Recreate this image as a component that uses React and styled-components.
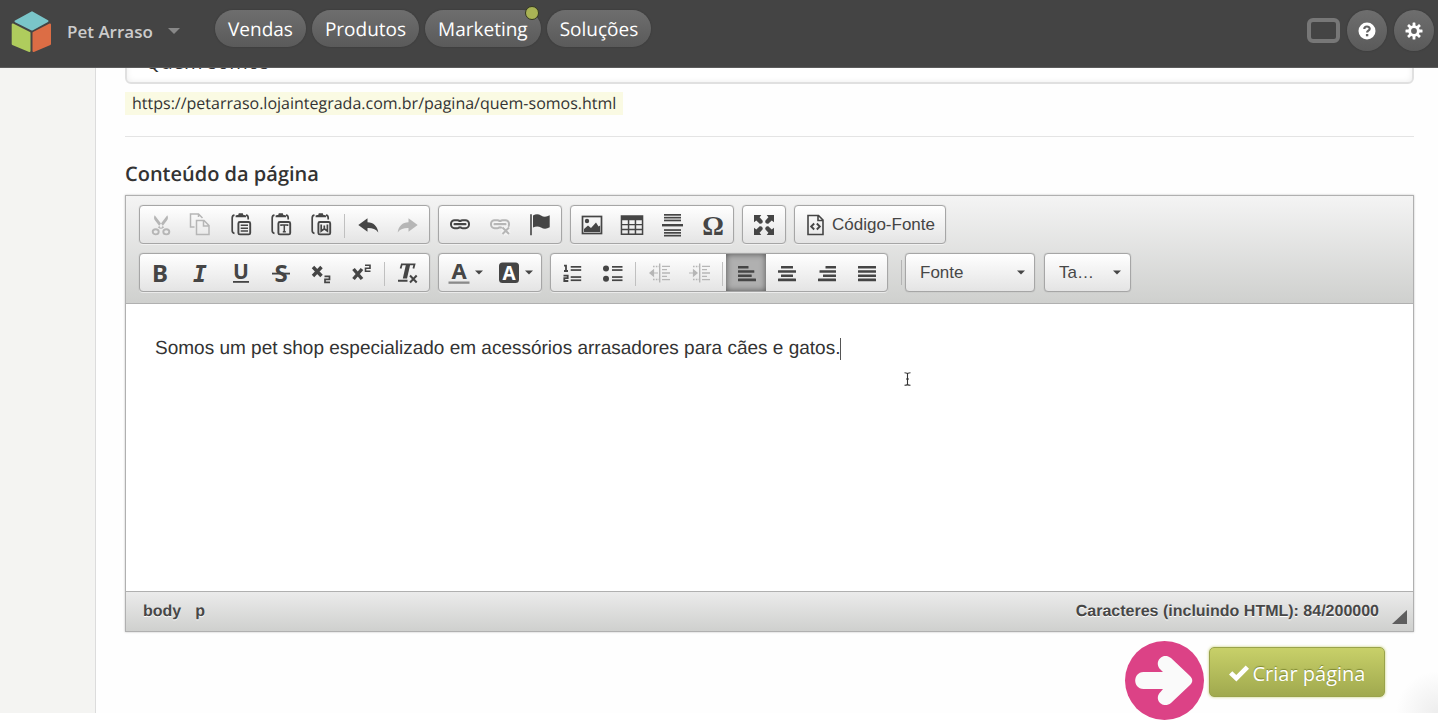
import React from "react";
import styled, { createGlobalStyle, css } from "styled-components";

const ui = '"Open Sans", "Noto Sans", sans-serif';
const editorFont = '"Liberation Sans", Arial, sans-serif';

const GlobalStyle = createGlobalStyle`
  *, *::before, *::after { box-sizing: border-box; }
  body { margin: 0; background: #fff; font-family: ${ui}; color: #333; text-rendering: geometricPrecision; }
  button, input, select { font: inherit; color: inherit; }
  button { margin: 0; padding: 0; border: 0; background: none; cursor: pointer; }
  svg { display: block; flex: none; overflow: visible; }
`;

/* ---------- top bar ---------- */
const TopBar = styled.header`
  position: fixed;
  inset: 0 0 auto 0;
  z-index: 10;
  display: flex;
  align-items: flex-start;
  height: 68px;
  padding: 10px 4px 0 10px;
  background: #444;
  border-bottom: 1px solid #5c5c5c;
`;
const StoreButton = styled.button`
  display: flex;
  align-items: center;
  width: 205px;
  height: 42px;
  gap: 15px;
  color: #ccc;
  font-size: 17px;
  font-weight: 600;
`;
const Nav = styled.nav`
  display: flex;
  flex: 1;
  gap: 6px;
`;
const raised = css`
  background: linear-gradient(#6e6e6e, #5a5a5a);
  box-shadow: 0 0 2px rgba(0, 0, 0, 0.25);
`;
const NavLink = styled.a`
  ${raised}
  position: relative;
  height: 37px;
  padding: 0 13px;
  border-radius: 19px;
  color: #fff;
  font-size: 19px;
  line-height: 38px;
  text-decoration: none;
`;
const Dot = styled.span`
  position: absolute;
  top: -4px;
  right: 2px;
  width: 14px;
  height: 14px;
  border: 1px solid #33361f;
  border-radius: 50%;
  background: #a9b355;
`;
const Tools = styled.div`
  display: flex;
  align-items: center;
  gap: 7px;
`;
const ScreenButton = styled.button`
  width: 33px;
  height: 25px;
  border: 4px solid #777;
  border-radius: 6px;
`;
const RoundButton = styled.button`
  ${raised}
  display: grid;
  place-items: center;
  width: 40px;
  height: 41px;
  border-radius: 50%;
`;

/* ---------- page ---------- */
const Page = styled.div`
  min-height: 100vh;
  padding-bottom: 7px;
`;
const Layout = styled.div`
  display: grid;
  grid-template-columns: 96px minmax(0, 1fr);
`;
const Side = styled.aside`
  background: #f4f4f2;
  border-right: 1px solid #dcdcdc;
`;
const Main = styled.main`
  padding: 40px 24px 16px 29px;
  background: radial-gradient(circle at 100% 100%, #ededed 0, #fefefe 42px);
`;
const TitleInput = styled.input`
  display: block;
  width: 100%;
  height: 44px;
  padding: 0 18px 2px;
  border: 2px solid #e0e0e0;
  border-radius: 6px;
  background: #fff;
  box-shadow: inset 0 0 6px rgba(0, 0, 0, 0.08);
  font-size: 20px;
`;
const PageUrl = styled.p`
  width: fit-content;
  margin: 8px 0 21px;
  padding: 0 7px;
  background: #fafae3;
  font-size: 16px;
  line-height: 23px;
`;
const Rule = styled.hr`
  height: 1px;
  margin: 0 0 23px;
  border: 0;
  background: #e4e4e4;
`;
const Label = styled.h2`
  margin: 0 0 7px;
  font-size: 20px;
  font-weight: 600;
  line-height: 28px;
`;

/* ---------- editor ---------- */
const Editor = styled.section`
  border: 1px solid #b0b0b0;
  box-shadow: 0 0 2px rgba(0, 0, 0, 0.25);
  background: #fff;
  color: #474747;
  font-family: ${editorFont};
`;
const Toolbar = styled.div`
  display: flex;
  flex-direction: column;
  gap: 9px;
  padding: 9px 13px 11px;
  border-bottom: 1px solid #b0b0b0;
  background: linear-gradient(#f4f4f4, #cfd0ce);
`;
const ToolRow = styled.div`
  display: flex;
  gap: 8px;
`;
const Group = styled.div`
  display: flex;
  height: 39px;
  padding: 0 1px;
  border: 1px solid #a6a6a6;
  border-radius: 4px;
  background: linear-gradient(#fff, #e4e4e4);
  box-shadow: 0 1px 0 rgba(255, 255, 255, 0.6), 0 0 1px rgba(0, 0, 0, 0.3);
`;
const ToolButton = styled.button`
  display: flex;
  align-items: center;
  justify-content: center;
  gap: 3px;
  width: ${(p) => p.$width || "40px"};
  color: ${(p) => (p.disabled ? "#b6b6b6" : "#454545")};
  font-size: 17px;
  ${(p) =>
    p.$active &&
    css`
      background: #b0b0b0;
      box-shadow: inset 0 0 6px rgba(0, 0, 0, 0.55);
    `}
`;
const Divider = styled.span`
  width: 1px;
  margin: 8px 3px 5px;
  background: #c0c0c0;
`;
const RowDivider = styled.span`
  width: 1px;
  margin: 7px -5px 7px 5px;
  background: #b4b4b4;
`;
const SelectBox = styled.label`
  display: grid;
  align-items: center;
  width: ${(p) => p.$width};
  height: 39px;
  border: 1px solid #a6a6a6;
  border-radius: 4px;
  background: linear-gradient(#fff, #e4e4e4);
  box-shadow: 0 0 1px rgba(0, 0, 0, 0.3);
  margin-right: 1px;
  & > * { grid-area: 1 / 1; }
  & > svg { justify-self: end; margin-right: 8px; pointer-events: none; }
`;
const Select = styled.select`
  appearance: none;
  width: 100%;
  height: 100%;
  padding: 0 24px 0 14px;
  border: 0;
  background: none;
  font-size: 17px;
`;
const Writing = styled.div`
  position: relative;
  min-height: 287px;
  padding: 31px 29px;
  outline: 0;
  color: #333;
  font-size: 19px;
  line-height: 28px;
  p { display: flex; align-items: center; margin: 0; }
`;
const Caret = styled.span`
  width: 1px;
  height: 22px;
  background: #555;
`;
const Pointer = styled.svg`
  position: absolute;
  left: 777px;
  top: 68px;
`;
const Status = styled.footer`
  display: flex;
  align-items: center;
  height: 40px;
  padding: 1px 6px 0 17px;
  border-top: 1px solid #b0b0b0;
  background: linear-gradient(#ebebeb, #cfd0ce);
  font-size: 16px;
  font-weight: 700;
  text-shadow: 0 1px 0 #fff;
`;
const Path = styled.div`
  display: flex;
  flex: 1;
  gap: 14px;
  a { color: inherit; text-decoration: none; }
`;
const Grip = styled.svg`
  margin: 10px 0 0 13px;
`;

/* ---------- submit ---------- */
const Actions = styled.div`
  display: flex;
  justify-content: flex-end;
  padding: 15px 29px 0;
`;
const Anchor = styled.div`
  position: relative;
`;
const Submit = styled.button`
  display: flex;
  align-items: center;
  justify-content: center;
  gap: 4px;
  width: 176px;
  height: 50px;
  padding-top: 2px;
  border: 1px solid #9aa34b;
  border-radius: 5px;
  background: linear-gradient(#c8d069, #a0a94e);
  box-shadow: 0 0 3px #c3cb6c;
  color: #fff;
  font-size: 20px;
  text-shadow: 0 -1px 1px rgba(70, 80, 0, 0.5);
`;
const Hint = styled.svg`
  position: absolute;
  right: calc(100% + 5px);
  top: -6px;
`;

const Icon = ({ children, w = 24 }) => (
  <svg width={w} height="24" viewBox={`0 0 ${w} 24`} fill="currentColor" aria-hidden="true">
    {children}
  </svg>
);
const line = { fill: "none", stroke: "currentColor" };
const sans = { fontFamily: '"Noto Sans", "Open Sans", sans-serif', fontWeight: 700, textAnchor: "middle" };
const bars = (list) => list.map(([x, y, w, h], i) => <rect key={i} x={x} y={y} width={w} height={h} />);
const alignment = (rows) =>
  rows.map(([x, w], i) => <rect key={i} x={x} y={5 + i * 4.2} width={w} height="2.6" rx=".3" />);

const Arrow = () => (
  <svg width="10" height="5" viewBox="0 0 10 5" aria-hidden="true">
    <path d="M1 .5h8L5 4.6z" fill="#454545" />
  </svg>
);

const Clipboard = ({ children }) => (
  <>
    <path d="M5.5 2.2C3.8 2.4 3.2 3.3 3.2 5v12.5c0 1.7.6 2.6 2.3 2.8M17 2.2c1.6.2 2.2 1.1 2.2 2.8v1.5" {...line} strokeWidth="1.7" />
    <path d="M6.6 4.3V2.4l1.6-.5h1L9.8.2h4l.6 1.7h1l1.6.5v1.9z" />
    <rect x="9.4" y="9" width="11.8" height="12.4" rx="1.5" {...line} strokeWidth="1.9" />
    {children}
  </>
);
const Links = () => (
  <>
    <rect x="3" y="7.2" width="10" height="8" rx="3.6" {...line} strokeWidth="2" />
    <rect x="11" y="7.2" width="10" height="8" rx="3.6" {...line} strokeWidth="2" />
    <path d="M7 11.2h10" stroke="#f8f8f8" strokeWidth="4.4" />
    <path d="M6.6 11.2h10.8" {...line} strokeWidth="2.2" strokeLinecap="round" />
  </>
);
const Indent = ({ inward }) => (
  <>
    <path d="M12.7 2.5v19" {...line} strokeWidth="1.4" />
    <path d="M6 5.5h6M6 18.5h6" {...line} strokeWidth="1.3" strokeDasharray="1.6 1.2" />
    <path d="M15 5.3h8M15 8.7h5M15 12h8M15 15.3h5M15 18.7h8" {...line} strokeWidth="1.3" />
    <path d={inward ? "M2 12h7M6.5 9l3.6 3-3.6 3z" : "M4 12h7M6.5 9L2.9 12l3.6 3z"} {...line} fill="currentColor" strokeWidth="1.2" />
  </>
);

const glyphs = {
  cut: (
    <>
      <path d="M5.7 2.2c-1.2 2.2-.6 4 .4 5.400l6.500 8.500 2.500-1.700zM18.300 2.200c1.200 2.200.600 4-.400 5.400l-6.500 8.500-2.500-1.700z" />
      <ellipse cx="6.700" cy="18.800" rx="3" ry="2.600" {...line} strokeWidth="1.900" />
      <ellipse cx="17.300" cy="18.800" rx="3" ry="2.600" {...line} strokeWidth="1.900" />
    </>
  ),
  copy: (
    <path d="M5.500 14H1.500V1h8l4 4M9.500 1v3M7.500 7.500h7.500l5 5V21.500H7.500zM14.500 7.500v5.500H20" {...line} strokeWidth="1.500" />
  ),
  paste: <Clipboard><path d="M11.700 12.300h7.300M11.700 15.200h7.300M11.700 18.100h7.300" {...line} strokeWidth="1.500" /></Clipboard>,
  pasteText: <Clipboard><path d="M12 13v-1h6.600v1M15.300 12v7M13.800 18.700h3" {...line} strokeWidth="1.500" /></Clipboard>,
  pasteWord: <Clipboard><path d="M12.200 11.500v6.500l3.100-2.300 3.100 2.300v-6.500M15.300 12.500v3" {...line} strokeWidth="1.700" /></Clipboard>,
  undo: <path d="M2.300 12L11.500 5.200v4.100c6 .2 9.800 3.700 10.800 10.100-2.600-3.400-6-4.400-10.800-4.300V18.800z" />,
  redo: <path d="M21.700 12L12.500 5.200v4.100c-6 .2-9.800 3.700-10.800 10.100 2.600-3.400 6-4.400 10.800-4.300V18.800z" />,
  link: <Links />,
  unlink: (
    <>
      <Links />
      <path d="M14.500 14.500l6.500 6.500M21 14.500L14.500 21" stroke="#f4f4f4" strokeWidth="5" />
      <path d="M14.500 14.500l6.500 6.500M21 14.500L14.500 21" {...line} strokeWidth="2" />
    </>
  ),
  flag: <path d="M2.200 1.300h1.600v21H2.200zM5 2.500c3-1.800 5.500-1.600 8 0 2.800 1.700 5.500 1.500 8.700-.2v12c-3 1.800-5.900 1.900-8.700.2-2.500-1.500-5-1.500-8 0z" />,
  image: (
    <>
      <rect x="2.500" y="3.500" width="19" height="17" {...line} strokeWidth="1.700" />
      <circle cx="7" cy="8" r="2.200" />
      <path d="M4 19v-3l4-3.500 3 2.500 5-5.500 2.500 4 1.700-1V19z" />
    </>
  ),
  table: <path d="M.7 2.300h22.600v19.700H.7zM2.200 7.300v3.600h5.600V7.300zm7.100 0v3.600h5.400V7.300zm6.900 0v3.600h5.600V7.300zM2.200 12.300v3.500h5.600v-3.500zm7.100 0v3.500h5.400v-3.500zm6.900 0v3.500h5.600v-3.500zM2.200 17.200v3.400h5.600v-3.400zm7.100 0v3.400h5.400v-3.400zm6.900 0v3.400h5.600v-3.400z" fillRule="evenodd" />,
  rule: bars([[4, 1, 17, 1.7], [4, 3.8, 17, 1.7], [4, 6.6, 17, 1.7], [2, 11, 21, 2.4], [4, 16.2, 17, 1.7], [4, 19, 17, 1.7], [4, 21.8, 17, 1.7]]),
  omega: <text x="13" y="22" fontFamily="Liberation Serif, serif" fontWeight="700" fontSize="27" textAnchor="middle">Ω</text>,
  maximize: (
    <>
      {[0, 90, 180, 270].map((a) => (
        <path key={a} transform={`rotate(${a} 12 12)`} d="M2 2h7.300L7.600 4.300 10.700 7.700c.5 1.900-1.200 3.500-3 3L4.300 7.600 2 9.300z" />
      ))}
    </>
  ),
  bold: <text x="11" y="21" fontSize="24" {...sans}>B</text>,
  italic: <text x="11" y="21" fontFamily="DejaVu Sans Mono, monospace" fontWeight="700" fontStyle="italic" fontSize="23" textAnchor="middle">I</text>,
  underline: <><text x="12" y="18" fontSize="21" {...sans}>U</text><rect x="4" y="20" width="16" height="1.800" /></>,
  strike: <><text x="12" y="21" fontSize="24" {...sans}>S</text><rect x="3" y="11.700" width="18" height="1.800" /></>,
  sub: <><path d="M4 6l8.500 9M12.500 6L4 15" {...line} strokeWidth="3.400" /><path d="M15.500 15.300h5v3h-4.500v3h5" {...line} strokeWidth="1.700" /></>,
  sup: <><path d="M4.500 8l8.500 10M13 8L4.500 18" {...line} strokeWidth="3.400" /><path d="M16 4.300h5v3h-4.500v3h5" {...line} strokeWidth="1.600" /></>,
  clear: (
    <>
      <path d="M4.600 7.500l1.200-4.200h12.700L17.400 7.500" {...line} strokeWidth="1.800" />
      <path d="M10 3.300h4.300L11 17.500H6.800z" />
      <path d="M2 19.700h9.500M14 14.500l6.700 7M20.700 14.500l-6.700 7" {...line} strokeWidth="2" />
    </>
  ),
  color: <><text x="12" y="18" fontSize="22" {...sans}>A</text><rect x="1.500" y="20.500" width="21" height="2.300" fill="#8a8a8a" /></>,
  fill: <><rect x="2" y="1.500" width="20" height="20.500" rx="3.500" /><text x="12" y="18.500" fontSize="19" fill="#fff" {...sans}>A</text></>,
  numbers: (
    <>
      <path d="M4 4.700h2V9.700M4 10h4M3.500 14.600h4.200v2.600H4.300v2.800h4" {...line} strokeWidth="1.800" />
      {bars([[10.7, 5, 10.5, 1.7], [10.7, 8.2, 10.5, 1.7], [10.7, 15.2, 10.5, 1.7], [10.7, 18.4, 10.5, 1.7]])}
    </>
  ),
  bullets: (
    <>
      <circle cx="6" cy="7.500" r="3" /><circle cx="6" cy="17.700" r="3" />
      {bars([[12, 5, 10.5, 1.7], [12, 8.2, 10.5, 1.7], [12, 15.2, 10.5, 1.7], [12, 18.4, 10.5, 1.7]])}
    </>
  ),
  outdent: <Indent />,
  indent: <Indent inward />,
  left: alignment([[4, 10.5], [4, 16.3], [4, 13.7], [4, 18]]),
  center: alignment([[7, 12], [4, 18], [7, 12], [4, 18]]),
  right: alignment([[11.5, 10.5], [5.5, 16.500], [9, 13], [4, 18]]),
  justify: alignment([[4, 18], [4, 18], [4, 18], [4, 18]]),
};

const Tool = ({ name, label, off, active, menu }) => (
  <ToolButton type="button" aria-label={label} disabled={off} $active={active} $width={menu && "50px"}>
    <Icon>{glyphs[name]}</Icon>
    {menu && <Arrow />}
  </ToolButton>
);

const Cube = () => (
  <svg width="42" height="44" viewBox="0 0 42 44" aria-hidden="true" strokeLinejoin="round" strokeWidth="2">
    <path d="M22 3.300L37.500 12 22 20.500 5.500 12.300z" fill="#7ac5c9" stroke="#7ac5c9" />
    <path d="M2.700 15.500L19.500 24V42L2.700 35z" fill="#afcc5d" stroke="#afcc5d" />
    <path d="M40 15.500L23.500 24V42L40 35z" fill="#dc6d45" stroke="#dc6d45" />
  </svg>
);

export default function App() {
  return (
    <Page>
      <GlobalStyle />
      <TopBar>
        <StoreButton type="button">
          <Cube />
          Pet Arraso
          <svg width="12" height="6" viewBox="0 0 12 6" aria-hidden="true"><path d="M0 0h12L6 6z" fill="#888" /></svg>
        </StoreButton>
        <Nav>
          <NavLink href="#vendas">Vendas</NavLink>
          <NavLink href="#produtos">Produtos</NavLink>
          <NavLink href="#marketing">Marketing<Dot /></NavLink>
          <NavLink href="#solucoes">Soluções</NavLink>
        </Nav>
        <Tools>
          <ScreenButton type="button" aria-label="Tela" />
          <RoundButton type="button" aria-label="Ajuda">
            <svg width="18" height="18" viewBox="0 0 18 18">
              <circle cx="9" cy="9" r="8.500" fill="#fff" />
              <path d="M6.300 6.900C6.300 3.700 11.700 3.700 11.700 6.800c0 1.900-2.600 1.900-2.600 3.700" fill="none" stroke="#626262" strokeWidth="2.200" />
              <rect x="7.900" y="12" width="2.400" height="2.300" fill="#626262" />
            </svg>
          </RoundButton>
          <RoundButton type="button" aria-label="Configurações">
            <svg width="18" height="18" viewBox="0 0 18 18">
              {[0, 45, 90, 135].map((a) => (
                <rect key={a} x="7.600" y="0.500" width="2.800" height="17" rx=".5" fill="#fff" transform={`rotate(${a} 9 9)`} />
              ))}
              <circle cx="9" cy="9" r="5.800" fill="#fff" />
              <circle cx="9" cy="9" r="2.900" fill="#626262" />
            </svg>
          </RoundButton>
        </Tools>
      </TopBar>
      <Layout>
        <Side />
        <Main>
          <TitleInput aria-label="Título da página" defaultValue="Quem somos" />
          <PageUrl>https://petarraso.lojaintegrada.com.br/pagina/quem-somos.html</PageUrl>
          <Rule />
          <Label id="content-label">Conteúdo da página</Label>
          <Editor aria-labelledby="content-label">
            <Toolbar>
              <ToolRow>
                <Group>
                  <Tool name="cut" label="Recortar" off />
                  <Tool name="copy" label="Copiar" off />
                  <Tool name="paste" label="Colar" />
                  <Tool name="pasteText" label="Colar como texto" />
                  <Tool name="pasteWord" label="Colar do Word" />
                  <Divider />
                  <Tool name="undo" label="Desfazer" />
                  <Tool name="redo" label="Refazer" off />
                </Group>
                <Group>
                  <Tool name="link" label="Link" />
                  <Tool name="unlink" label="Remover link" off />
                  <Tool name="flag" label="Âncora" />
                </Group>
                <Group>
                  <Tool name="image" label="Imagem" />
                  <Tool name="table" label="Tabela" />
                  <Tool name="rule" label="Linha horizontal" />
                  <Tool name="omega" label="Caractere especial" />
                </Group>
                <Group>
                  <Tool name="maximize" label="Maximizar" />
                </Group>
                <Group>
                  <ToolButton type="button" $width="148px">
                    <Icon>
                      <path d="M3 2.500h10.500l4.500 4.500v14.500H3zM13 3v4.500h5" {...line} strokeWidth="1.600" />
                      <path d="M9.200 10.500L6.200 13.500l3 3M11.800 10.500l3 3-3 3" {...line} strokeWidth="1.900" />
                    </Icon>
                    Código-Fonte
                  </ToolButton>
                </Group>
              </ToolRow>
              <ToolRow>
                <Group>
                  <Tool name="bold" label="Negrito" />
                  <Tool name="italic" label="Itálico" />
                  <Tool name="underline" label="Sublinhado" />
                  <Tool name="strike" label="Tachado" />
                  <Tool name="sub" label="Subscrito" />
                  <Tool name="sup" label="Sobrescrito" />
                  <Divider />
                  <Tool name="clear" label="Remover formatação" />
                </Group>
                <Group>
                  <Tool name="color" label="Cor do texto" menu />
                  <Tool name="fill" label="Cor do fundo" menu />
                </Group>
                <Group>
                  <Tool name="numbers" label="Lista numerada" />
                  <Tool name="bullets" label="Lista sem números" />
                  <Divider />
                  <Tool name="outdent" label="Diminuir recuo" off />
                  <Tool name="indent" label="Aumentar recuo" off />
                  <Divider />
                  <Tool name="left" label="Alinhar à esquerda" active />
                  <Tool name="center" label="Centralizar" />
                  <Tool name="right" label="Alinhar à direita" />
                  <Tool name="justify" label="Justificado" />
                </Group>
                <RowDivider />
                <SelectBox $width="130px">
                  <Select aria-label="Fonte"><option>Fonte</option></Select>
                  <Arrow />
                </SelectBox>
                <SelectBox $width="87px">
                  <Select aria-label="Tamanho"><option>Ta…</option></Select>
                  <Arrow />
                </SelectBox>
              </ToolRow>
            </Toolbar>
            <Writing contentEditable suppressContentEditableWarning role="textbox" aria-labelledby="content-label">
              <p>Somos um pet shop especializado em acessórios arrasadores para cães e gatos.<Caret /></p>
              <Pointer width="9" height="14" viewBox="0 0 9 14" aria-hidden="true">
                <path d="M1.500.7c1.500 0 3 .3 3 1.300v10c0 1-1.500 1.300-3 1.300M7.500.7c-1.500 0-3 .3-3 1.300M4.500 12c0 1 1.500 1.300 3 1.300M3 7h3" fill="none" stroke="#333" strokeWidth="1.100" />
              </Pointer>
            </Writing>
            <Status>
              <Path><a href="#body">body</a><a href="#p">p</a></Path>
              <span>Caracteres (incluindo HTML): 84/200000</span>
              <Grip width="15" height="15" viewBox="0 0 15 15" aria-hidden="true"><path d="M15 0v14H0z" fill="#5e5e5e" /></Grip>
            </Status>
          </Editor>
          <Actions>
            <Anchor>
              <Hint width="79" height="79" viewBox="0 0 79 79" aria-hidden="true">
                <circle cx="39.500" cy="39.500" r="39.500" fill="#dc4286" />
                <path d="M18.500 31H38L35.500 28.500C28 20.500 38 10.500 46 17L65 35c3 3 3 6 0 9L46 62c-8 6.500-18-3.500-10.500-11L38 48H18.500C7.500 47.500 7.500 31.500 18.500 31z" fill="#fafafa" />
              </Hint>
              <Submit type="submit">
                <svg width="20" height="17" viewBox="0 0 20 17" aria-hidden="true">
                  <path d="M0 9.500l3.300-3.300 4 3.800L16.700.500 20 3.800 7.400 16.500z" fill="#fff" />
                </svg>
                Criar página
              </Submit>
            </Anchor>
          </Actions>
        </Main>
      </Layout>
    </Page>
  );
}
